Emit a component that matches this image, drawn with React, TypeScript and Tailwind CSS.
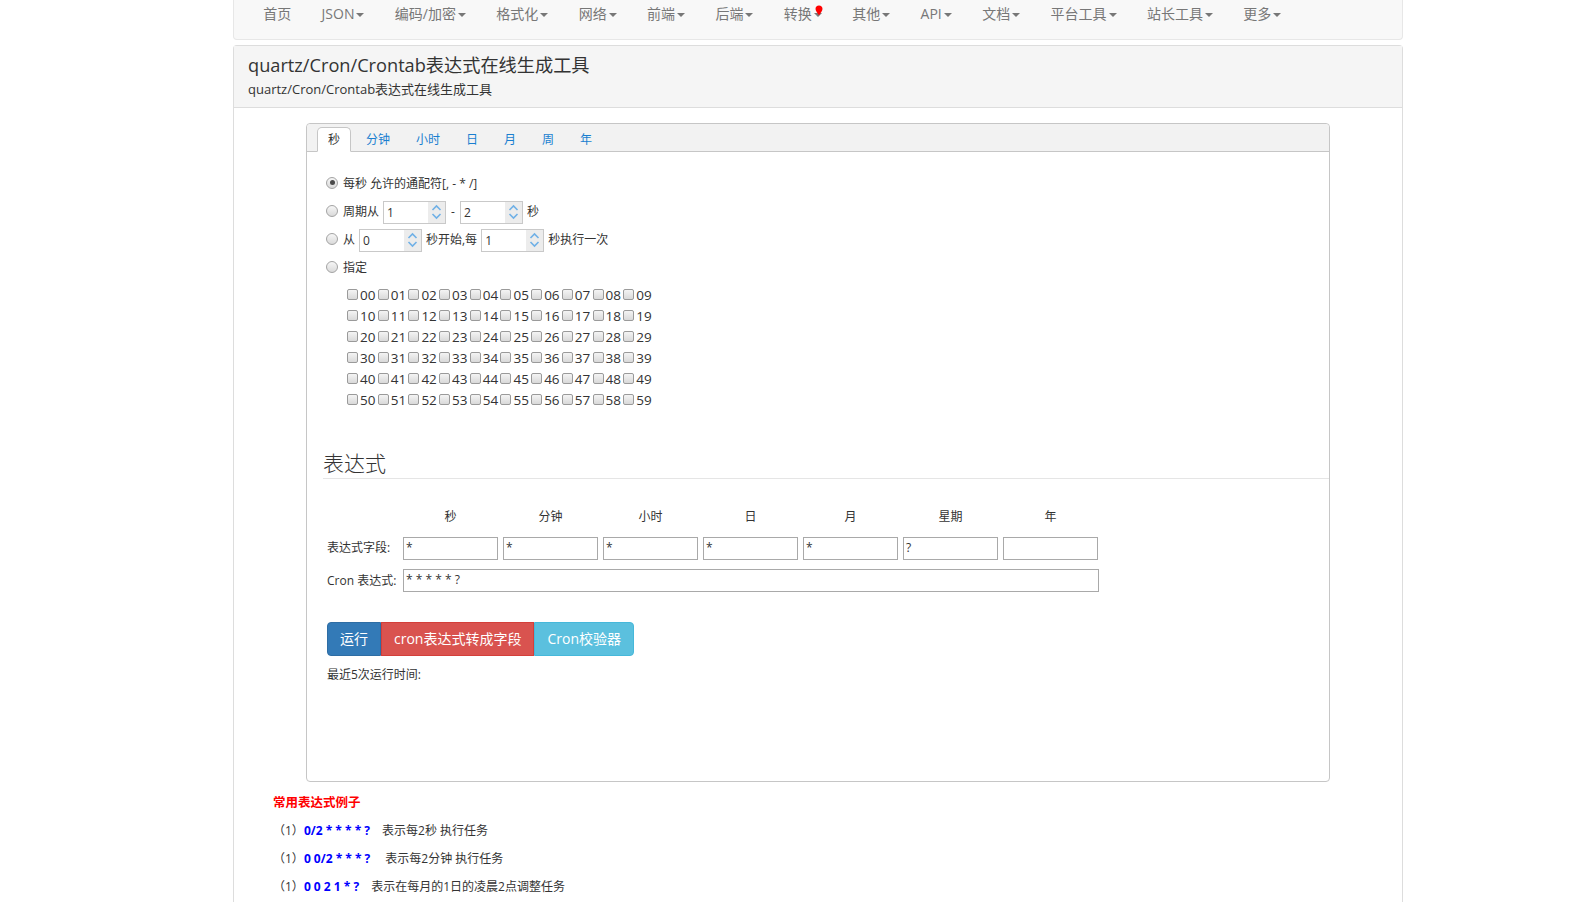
import { useState } from "react";

const navItems: { label: string; caret: boolean; dot?: boolean }[] = [
  { label: "首页", caret: false },
  { label: "JSON", caret: true },
  { label: "编码/加密", caret: true },
  { label: "格式化", caret: true },
  { label: "网络", caret: true },
  { label: "前端", caret: true },
  { label: "后端", caret: true },
  { label: "转换", caret: true, dot: true },
  { label: "其他", caret: true },
  { label: "API", caret: true },
  { label: "文档", caret: true },
  { label: "平台工具", caret: true },
  { label: "站长工具", caret: true },
  { label: "更多", caret: true },
];

const tabs = ["秒", "分钟", "小时", "日", "月", "周", "年"];
const columns = ["秒", "分钟", "小时", "日", "月", "星期", "年"];
const fieldValues = ["*", "*", "*", "*", "*", "?", ""];

const examples = [
  { code: "0/2 * * * * ?", gap: "ml-[12px]", text: "表示每2秒 执行任务" },
  { code: "0 0/2 * * * ?", gap: "ml-[15px]", text: "表示每2分钟 执行任务" },
  { code: "0 0 2 1 * ?", gap: "ml-[12px]", text: "表示在每月的1日的凌晨2点调整任务" },
];

function Caret() {
  return (
    <span className="ml-[2px] inline-block h-0 w-0 border-x-[4px] border-t-[4px] border-x-transparent border-t-[#777] align-middle" />
  );
}

function Radio({ checked }: { checked?: boolean }) {
  return (
    <span className="mb-[3px] flex h-[12px] w-[12px] shrink-0 items-center justify-center rounded-full border border-[#a3a3a3] bg-gradient-to-b from-[#f6f6f6] to-[#dadada]">
      {checked && <span className="h-[5px] w-[5px] rounded-full bg-[#4a4a4a]" />}
    </span>
  );
}

function Checkbox() {
  return (
    <span className="mb-[3px] h-[11px] w-[11px] shrink-0 rounded-[2px] border border-[#9a9a9a] bg-gradient-to-b from-[#f4f4f4] to-[#d9d9d9]" />
  );
}

function Spinner({ value }: { value: string }) {
  return (
    <span className="flex h-[23px] w-[63px] border border-[#c9c9c9] bg-white">
      <span className="flex-1 pl-[3px] text-[12px] leading-[22px] text-[#333]">{value}</span>
      <span className="flex w-[17px] flex-col items-center justify-center bg-[#ececec]">
        <svg width="11" height="8" viewBox="0 0 11 8">
          <path d="M1.5 6 L5.5 2 L9.5 6" fill="none" stroke="#6fb0e6" strokeWidth="1.6" />
        </svg>
        <svg width="11" height="8" viewBox="0 0 11 8">
          <path d="M1.5 2 L5.5 6 L9.5 2" fill="none" stroke="#6fb0e6" strokeWidth="1.6" />
        </svg>
      </span>
    </span>
  );
}

export default function App() {
  const [activeTab, setActiveTab] = useState(0);

  return (
    <div className="min-h-screen bg-white font-['Open_Sans','Noto_Sans_CJK_SC',sans-serif] text-[#333]">
      <div className="ml-[233px] w-[1170px]">
        <nav className="mb-[5px] h-[40px] rounded-b-[4px] border border-t-0 border-[#e7e7e7] bg-[#f8f8f8]">
          <ul className="flex pl-[14px]">
            {navItems.map((item) => (
              <li
                key={item.label}
                className="relative px-[15.2px] pt-[4px] text-[14px] leading-[20px] text-[#777]"
              >
                {item.label}
                {item.caret && <Caret />}
                {item.dot && (
                  <svg
                    className="absolute right-[14px] top-[5px]"
                    width="8"
                    height="11"
                    viewBox="0 0 8 11"
                  >
                    <path d="M4 0.5 C6.2 0.5 7.5 2 7.5 4 C7.5 6.2 5.2 8 4 10.5 C2.8 8 0.5 6.2 0.5 4 C0.5 2 1.8 0.5 4 0.5 Z" fill="#f00" />
                  </svg>
                )}
              </li>
            ))}
          </ul>
        </nav>

        <div className="rounded-t-[4px] border border-b-0 border-[#ddd]">
          <div className="border-b border-[#ddd] bg-[#f5f5f5] px-[14px] pb-[9px] pt-[8px]">
            <h3 className="text-[18.2px] leading-[22px] text-[#333]">
              quartz/Cron/Crontab表达式在线生成工具
            </h3>
            <p className="mt-[4px] text-[13px] leading-[18px] text-[#333]">
              quartz/Cron/Crontab表达式在线生成工具
            </p>
          </div>

          <div className="bg-white pb-[20px] pt-[15px]">
            <div className="mx-auto h-[659px] w-[1024px] rounded-[4px] border border-[#c6c6c6]">
              <div className="flex h-[28px] items-end rounded-t-[4px] border-b border-[#c6c6c6] bg-[#f2f2f2] pl-[10px]">
                {tabs.map((tab, i) => (
                  <button
                    key={tab}
                    type="button"
                    onClick={() => setActiveTab(i)}
                    className={
                      i === activeTab
                        ? "mb-[-1px] mr-[4px] h-[25px] rounded-t-[5px] border border-b-white border-[#c6c6c6] bg-white px-[10px] text-[12px] leading-[23px] text-[#333]"
                        : "mb-[-1px] mr-[4px] h-[25px] rounded-t-[5px] border border-transparent px-[10px] text-[12px] leading-[23px] text-[#1a7fd0]"
                    }
                  >
                    {tab}
                  </button>
                ))}
              </div>

              <div className="pl-[16px] pt-[18px] text-[12px]">
                <div className="pl-[3px]">
                  <div className="flex h-[28px] items-center gap-[5px]">
                    <Radio checked />
                    <span>每秒 允许的通配符[, - * /]</span>
                  </div>
                  <div className="flex h-[28px] items-center gap-[4px]">
                    <Radio />
                    <span className="ml-[1px]">周期从</span>
                    <Spinner value="1" />
                    <span className="px-[1px]">-</span>
                    <Spinner value="2" />
                    <span>秒</span>
                  </div>
                  <div className="flex h-[28px] items-center gap-[4px]">
                    <Radio />
                    <span className="ml-[1px]">从</span>
                    <Spinner value="0" />
                    <span>秒开始,每</span>
                    <Spinner value="1" />
                    <span>秒执行一次</span>
                  </div>
                  <div className="flex h-[28px] items-center gap-[5px]">
                    <Radio />
                    <span>指定</span>
                  </div>
                </div>

                <div className="mt-[3px] pl-[24px]">
                  {[0, 1, 2, 3, 4, 5].map((row) => (
                    <div key={row} className="flex h-[21px] items-center">
                      {[0, 1, 2, 3, 4, 5, 6, 7, 8, 9].map((col) => (
                        <label key={col} className="flex w-[30.7px] items-center gap-[2px] text-[13.5px] leading-[21px]">
                          <Checkbox />
                          <span>{String(row * 10 + col).padStart(2, "0")}</span>
                        </label>
                      ))}
                    </div>
                  ))}
                </div>

                <div className="mt-[37px] border-b border-[#e5e5e5] text-[21px] font-light leading-[30px] text-[#333]">
                  表达式
                </div>

                <div className="ml-[4px] mt-[23px] grid grid-cols-[76px_repeat(7,100px)]">
                  <div />
                  {columns.map((c) => (
                    <div key={c} className="flex h-[30px] w-[95px] items-center justify-center">
                      {c}
                    </div>
                  ))}

                  <div className="flex h-[32px] items-center">表达式字段:</div>
                  {fieldValues.map((v, i) => (
                    <div key={i} className="flex h-[32px] items-center">
                      <div className="h-[23px] w-[95px] border border-[#a9a9a9] pl-[2px] leading-[20px]">
                        {v}
                      </div>
                    </div>
                  ))}

                  <div className="flex h-[33px] items-center">Cron 表达式:</div>
                  <div className="col-span-7 flex h-[33px] items-center">
                    <div className="h-[23px] w-[696px] border border-[#a9a9a9] pl-[2px] leading-[20px]">
                      * * * * * ?
                    </div>
                  </div>
                </div>

                <div className="ml-[4px] mt-[25px] flex text-[14px] leading-[20px] text-white">
                  <button type="button" className="rounded-l-[4px] border border-[#2e6da4] bg-[#337ab7] px-[12px] py-[6px]">
                    运行
                  </button>
                  <button type="button" className="border border-[#d43f3a] bg-[#d9534f] px-[12px] py-[6px]">
                    cron表达式转成字段
                  </button>
                  <button type="button" className="rounded-r-[4px] border border-[#46b8da] bg-[#5bc0de] px-[12px] py-[6px]">
                    Cron校验器
                  </button>
                </div>

                <p className="ml-[4px] mt-[10px] leading-[17px]">最近5次运行时间:</p>
              </div>
            </div>

            <div className="pl-[39px] pt-[11px]">
              <p className="text-[12.5px] font-bold leading-[20px] text-[#f00]">常用表达式例子</p>
              <div className="mt-[4px] text-[12px]">
                {examples.map((ex) => (
                  <div key={ex.code} className="flex h-[28px] items-center">
                    <span>（1）</span>
                    <b className="text-[#00f]">{ex.code}</b>
                    <span className={ex.gap}>{ex.text}</span>
                  </div>
                ))}
              </div>
            </div>
          </div>
        </div>
      </div>
    </div>
  );
}
